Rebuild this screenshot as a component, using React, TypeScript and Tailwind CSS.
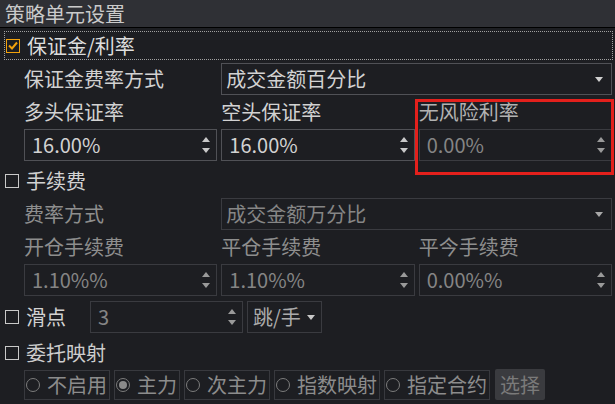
import React from "react";

const font = { fontFamily: '"Noto Sans CJK SC", "Noto Sans", sans-serif' };

function Check({ checked = false }: { checked?: boolean }) {
  return (
    <div
      className={`flex h-[14px] w-[14px] shrink-0 items-center justify-center border ${
        checked ? "border-[#f2a20c]" : "border-[#c9c9c9]"
      }`}
    >
      {checked && (
        <svg width="10" height="9" viewBox="0 0 10 9">
          <path d="M1 4.5 L4 7.5 L9 1.5" fill="none" stroke="#f2a20c" strokeWidth="2" />
        </svg>
      )}
    </div>
  );
}

function Arrow({ up, color }: { up?: boolean; color: string }) {
  return (
    <svg width="8" height="5" viewBox="0 0 8 5">
      <path d={up ? "M0 5 L4 0 L8 5 Z" : "M0 0 L8 0 L4 5 Z"} fill={color} />
    </svg>
  );
}

function Spin({
  value,
  disabled = false,
  className = "",
}: {
  value: string;
  disabled?: boolean;
  className?: string;
}) {
  return (
    <div
      className={`flex h-[32px] items-center justify-between border pl-[7px] pr-[6px] ${
        disabled ? "border-[#3a3b40] text-[#858585]" : "border-[#505156] text-[#d2d2d2]"
      } ${className}`}
    >
      <span>{value}</span>
      <div className="flex h-full flex-col justify-between py-[7px]">
        <Arrow up color={disabled ? "#9a9a9a" : "#c8c8c8"} />
        <Arrow color={disabled ? "#9a9a9a" : "#c8c8c8"} />
      </div>
    </div>
  );
}

function Select({ value, disabled = false }: { value: string; disabled?: boolean }) {
  return (
    <div
      className={`col-span-2 flex h-[32px] items-center justify-between border pl-[4px] pr-[8px] ${
        disabled ? "border-[#3a3b40] text-[#868686]" : "border-[#505156] text-[#d2d2d2]"
      }`}
    >
      <span>{value}</span>
      <Arrow color={disabled ? "#a8a8a8" : "#d0d0d0"} />
    </div>
  );
}

function Radio({ label, on = false, w }: { label: string; on?: boolean; w: string }) {
  return (
    <div className={`flex h-[30px] items-center gap-[7px] border border-[#38393e] pl-[1px] ${w}`}>
      <div className="flex h-[14px] w-[14px] items-center justify-center rounded-full border border-[#7c7c7c]">
        {on && <div className="h-[8px] w-[8px] rounded-full bg-[#8a8a8a]" />}
      </div>
      <span className="text-[#8c8c8c]">{label}</span>
    </div>
  );
}

export default function App() {
  return (
    <div
      className="relative h-[404px] w-[615px] overflow-hidden bg-[#1d1e22] text-[20px] leading-none"
      style={font}
    >
      <div className="flex h-[28px] items-center border-b border-black bg-[#2f3035] pl-[5px] text-[#cacaca]">
        策略单元设置
      </div>

      <div className="pl-[4px] pr-[2px]">
        {/* 保证金/利率 */}
        <div className="mt-[3px] flex h-[29px] items-center gap-[7px] border border-dotted border-[#a0a0a0] pl-[1px] text-[#dedede]">
          <Check checked />
          <span>保证金/利率</span>
        </div>

        <div className="grid grid-cols-3 gap-x-[4px] pl-[20px] pr-[1px] text-[#d2d2d2]">
          <div className="mt-[3px] flex h-[32px] items-center">保证金费率方式</div>
          <div className="mt-[3px] col-span-2 grid">
            <Select value="成交金额百分比" />
          </div>
          <div className="flex h-[34px] items-center">多头保证率</div>
          <div className="flex h-[34px] items-center">空头保证率</div>
          <div className="flex h-[34px] items-center text-[#b2b2b2]">无风险利率</div>
          <Spin value="16.00%" />
          <Spin value="16.00%" />
          <Spin value="0.00%" disabled />
        </div>

        {/* 手续费 */}
        <div className="flex h-[37px] items-center gap-[7px] pl-[1px] pt-[3px] text-[#d2d2d2]">
          <Check />
          <span>手续费</span>
        </div>

        <div className="grid grid-cols-3 gap-x-[4px] pl-[20px] pr-[1px] text-[#8e8e8e]">
          <div className="flex h-[32px] items-center">费率方式</div>
          <div className="col-span-2 grid">
            <Select value="成交金额万分比" disabled />
          </div>
          <div className="flex h-[34px] items-center">开仓手续费</div>
          <div className="flex h-[34px] items-center">平仓手续费</div>
          <div className="flex h-[34px] items-center">平今手续费</div>
          <Spin value="1.10%%" disabled />
          <Spin value="1.10%%" disabled />
          <Spin value="0.00%%" disabled />
        </div>

        {/* 滑点 */}
        <div className="mt-[5px] flex h-[32px] items-center pl-[1px] text-[#d2d2d2]">
          <Check />
          <span className="ml-[7px]">滑点</span>
          <Spin value="3" disabled className="ml-[24px] w-[153px]" />
          <div className="ml-[4px] flex h-[32px] w-[75px] items-center gap-[6px] border border-[#3a3b40] pl-[5px] text-[#ababab]">
            <span>跳/手</span>
            <Arrow color="#c8c8c8" />
          </div>
        </div>

        {/* 委托映射 */}
        <div className="flex h-[36px] items-center gap-[7px] pl-[1px] pt-[4px] text-[#cdcdcd]">
          <Check />
          <span>委托映射</span>
        </div>

        <div className="flex items-center gap-[4px] pl-[20px]">
          <Radio label="不启用" w="w-[86px]" />
          <Radio label="主力" on w="w-[66px]" />
          <Radio label="次主力" w="w-[86px]" />
          <Radio label="指数映射" w="w-[106px]" />
          <Radio label="指定合约" w="w-[106px]" />
          <div className="ml-[1px] flex h-[31px] w-[50px] items-center justify-center rounded-[2px] bg-[#3a3b3f] text-[#7a7a7a]">
            选择
          </div>
        </div>
      </div>

      {/* highlight annotation */}
      <div className="pointer-events-none absolute left-[415px] top-[99px] h-[76px] w-[199px] border-[3px] border-[#e3201c]" />
    </div>
  );
}
